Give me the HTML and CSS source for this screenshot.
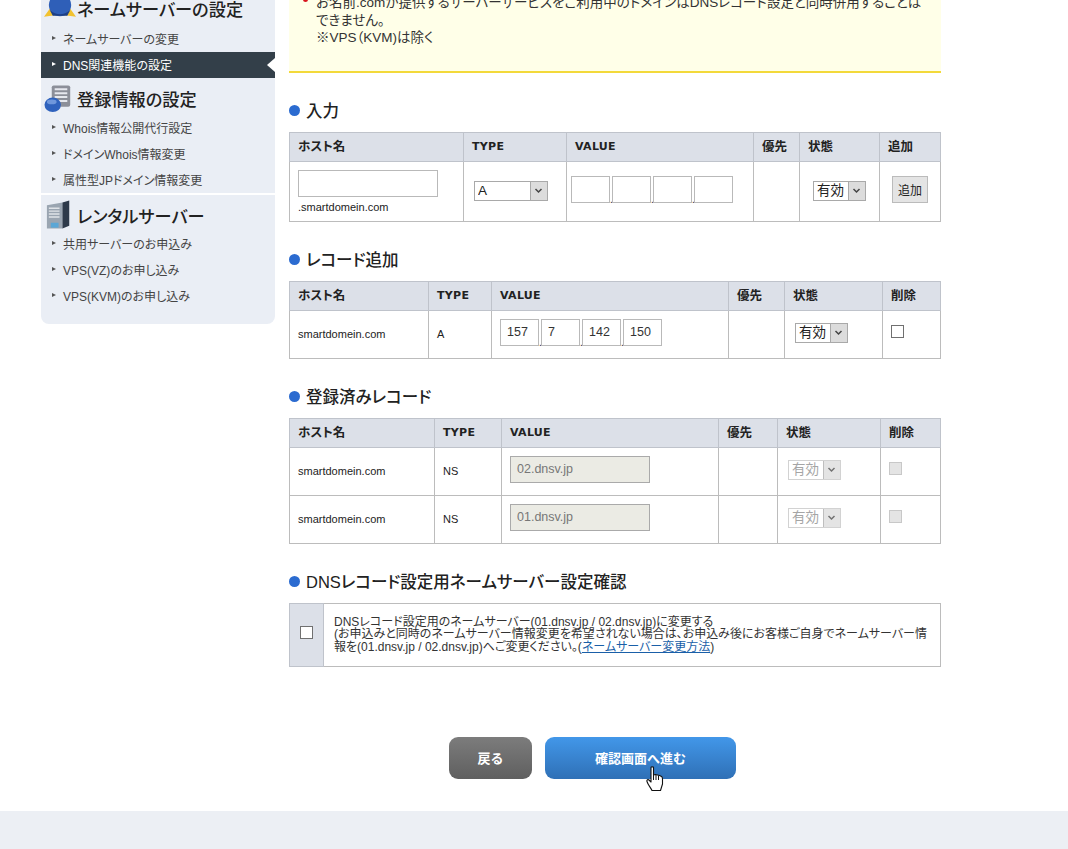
FILE: index.html
```html
<!DOCTYPE html>
<html lang="ja">
<head>
  <meta charset="UTF-8" />
  <title>DNS関連機能の設定</title>
  <link rel="stylesheet" href="styles.css">
</head>
<body>

<div class="layout">
  <div class="sidebar">
    <div class="side-title first">
      <svg class="side-icon" width="34" height="30" viewBox="0 0 34 30">
        <path d="M0 24 L10 10 L15 22 Z M33 24 L23 10 L18 22 Z" fill="#f2c230"/>
        <circle cx="16.500" cy="12" r="11.500" fill="#2f5fb8"/>
        <path d="M6 17 Q16.500 26 27 17 L24 23 L9 23 Z" fill="#1d3f85"/>
      </svg>
      ネームサーバーの設定
    </div>
    <a class="side-link">ネームサーバーの変更</a>
    <a class="side-link active">DNS関連機能の設定</a>

    <div class="side-title">
      <svg class="side-icon" width="34" height="30" viewBox="0 0 34 30">
        <rect x="8" y="1" width="19" height="22" rx="2" fill="#8c8f99"/>
        <path d="M11 5h13M11 9h13M11 13h13M11 17h13" stroke="#e6e8ee" stroke-width="2"/>
        <ellipse cx="9" cy="21" rx="8.500" ry="7.500" fill="#2f62bd"/>
        <ellipse cx="8" cy="18" rx="5" ry="2.500" fill="#6f97dc"/>
      </svg>
      登録情報の設定
    </div>
    <a class="side-link">Whois情報公開代行設定</a>
    <a class="side-link">ドメインWhois情報変更</a>
    <a class="side-link">属性型JPドメイン情報変更</a>

    <div class="side-sep"></div>

    <div class="side-title">
      <svg class="side-icon" width="34" height="30" viewBox="0 0 34 30">
        <path d="M3 5 L19 2 L19 29 L3 29 Z" fill="#9aa5b1"/>
        <path d="M19 2 L26 0 L26 26 L19 29 Z" fill="#2e3a4a"/>
        <path d="M5 8h11M5 11h11M5 14h11M5 17h11" stroke="#dfe3e8" stroke-width="1.500"/>
        <rect x="7" y="23" width="8" height="5" fill="#5ba7d6"/>
      </svg>
      レンタルサーバー
    </div>
    <a class="side-link">共用サーバーのお申込み</a>
    <a class="side-link">VPS(VZ)のお申し込み</a>
    <a class="side-link">VPS(KVM)のお申し込み</a>
  </div>

  <div class="main">
    <div class="notice">
      <ul>
        <li>お名前.comが提供するサーバーサービスをご利用中のドメインはDNSレコード設定と同時併用することは<br>できません。<br>※VPS（KVM)は除く</li>
      </ul>
    </div>

    <h3 class="sec-title">入力</h3>
    <table class="grid t-input">
      <tr>
        <th>ホスト名</th><th class="en">TYPE</th><th class="en">VALUE</th><th>優先</th><th>状態</th><th>追加</th>
      </tr>
      <tr class="row-tall">
        <td class="host-cell">
          <input type="text" class="host-input">
          <div class="host-suffix">.smartdomein.com</div>
        </td>
        <td><select class="sel sel-type"><option>A</option></select></td>
        <td>
          <div class="ip-group">
            <input type="text"><span class="dot">.</span><input type="text"><span class="dot">.</span><input type="text"><span class="dot">.</span><input type="text">
          </div>
        </td>
        <td></td>
        <td class="center"><select class="sel sel-state"><option>有効</option></select></td>
        <td class="center"><button class="add-btn" type="button">追加</button></td>
      </tr>
    </table>

    <h3 class="sec-title">レコード追加</h3>
    <table class="grid t-add">
      <tr>
        <th>ホスト名</th><th class="en">TYPE</th><th class="en">VALUE</th><th>優先</th><th>状態</th><th>削除</th>
      </tr>
      <tr class="row-mid">
        <td>smartdomein.com</td>
        <td>A</td>
        <td>
          <div class="ip-group">
            <input type="text" value="157"><span class="dot">.</span><input type="text" value="7"><span class="dot">.</span><input type="text" value="142"><span class="dot">.</span><input type="text" value="150">
          </div>
        </td>
        <td></td>
        <td><select class="sel sel-state"><option>有効</option></select></td>
        <td><input type="checkbox" class="check"></td>
      </tr>
    </table>

    <h3 class="sec-title">登録済みレコード</h3>
    <table class="grid t-done">
      <tr>
        <th>ホスト名</th><th class="en">TYPE</th><th class="en">VALUE</th><th>優先</th><th>状態</th><th>削除</th>
      </tr>
      <tr class="row-mid">
        <td>smartdomein.com</td>
        <td>NS</td>
        <td><input type="text" class="value-off" value="02.dnsv.jp" disabled></td>
        <td></td>
        <td><select class="sel sel-state sel-off" disabled><option>有効</option></select></td>
        <td><input type="checkbox" class="check" disabled></td>
      </tr>
      <tr class="row-mid">
        <td>smartdomein.com</td>
        <td>NS</td>
        <td><input type="text" class="value-off" value="01.dnsv.jp" disabled></td>
        <td></td>
        <td><select class="sel sel-state sel-off" disabled><option>有効</option></select></td>
        <td><input type="checkbox" class="check" disabled></td>
      </tr>
    </table>

    <h3 class="sec-title">DNSレコード設定用ネームサーバー設定確認</h3>
    <table class="grid t-confirm">
      <tr>
        <th class="center"><input type="checkbox" class="check"></th>
        <td>DNSレコード設定用のネームサーバー(01.dnsv.jp / 02.dnsv.jp)に変更する<br>(お申込みと同時のネームサーバー情報変更を希望されない場合は、お申込み後にお客様ご自身でネームサーバー情報を(01.dnsv.jp / 02.dnsv.jp)へご変更ください。(<a href="#">ネームサーバー変更方法</a>)</td>
      </tr>
    </table>

    <div class="actions">
      <button class="btn btn-back" type="button">戻る</button>
      <button class="btn btn-next" type="button">確認画面へ進む
        <svg class="hand" width="18" height="26" viewBox="0 0 18 26">
          <path d="M5 1.500 C5 .5 7.500 .5 7.500 1.500 L7.500 9 L9.500 8.500 L11.500 9 L13.500 9.500 L15.500 10.500 C16.500 11 16.500 12 16.500 13 L16.500 18 L14.500 24.500 L6 24.500 C5 22 2 19 1 15.500 C.5 14 2 13 3 14 L5 16 Z" fill="#fff" stroke="#111" stroke-width="1.100" stroke-linejoin="round"/>
          <path d="M7.500 9 L7.500 14 M10 9 L10 14 M12.500 9.500 L12.500 14" stroke="#111" stroke-width="1" fill="none"/>
        </svg>
      </button>
    </div>
  </div>
</div>

<div class="footer"></div>

</body>
</html>
```

FILE: styles.css
```css
html, body {
  margin: 0;
  padding: 0;
  height: 849px;
  overflow: hidden;
  background: #fff;
  color: #222;
  font-family: "Liberation Sans", "Noto Sans CJK JP", sans-serif;
  font-feature-settings: "palt";
}

.layout {
  display: flex;
  align-items: flex-start;
  gap: 14px;
  margin-top: -30px;
  padding-left: 41px;
}

/* sidebar */
.sidebar {
  width: 234px;
  padding: 22px 0 15px;
  background: #eaeef5;
  border-radius: 0 0 8px 8px;
}

.side-title {
  display: flex;
  align-items: center;
  box-sizing: border-box;
  height: 37px;
  padding: 6px 0 2px 3px;
  font-size: 17.200px;
  font-weight: 500;
  color: #222;
}

.side-title.first {
  height: 34px;
  padding-top: 0;
}

.side-sep + .side-title {
  height: 36px;
}

.side-icon {
  flex: none;
  width: 33px;
}

.side-link {
  display: block;
  position: relative;
  height: 26px;
  line-height: 28px;
  padding-left: 22px;
  font-size: 12px;
  color: #444;
}

.side-link::before {
  content: "";
  position: absolute;
  left: 11px;
  top: 10px;
  border-left: 4px solid #555;
  border-top: 2.500px solid transparent;
  border-bottom: 2.500px solid transparent;
}

.side-link.active {
  background: #333f49;
  color: #fff;
}

.side-link.active::before {
  border-left-color: #fff;
}

.side-link.active::after {
  content: "";
  position: absolute;
  right: 0;
  top: 6px;
  border-right: 8px solid #fff;
  border-top: 7px solid transparent;
  border-bottom: 7px solid transparent;
}

.side-sep {
  height: 2px;
  background: #fff;
}

/* main column */
.main {
  width: 652px;
}

.notice {
  padding: 24px 10px 24px 27px;
  background: #ffffe8;
  border-bottom: 2px solid #f3d93a;
  font-size: 13.500px;
  line-height: 17.500px;
  color: #333;
}

.notice ul {
  margin: 0;
  padding: 0;
  list-style: none;
}

.notice li {
  position: relative;
}

.notice li::before {
  content: "";
  position: absolute;
  left: -13px;
  top: 3px;
  width: 5px;
  height: 5px;
  border-radius: 50%;
  background: #d8141c;
}

.sec-title {
  display: flex;
  align-items: center;
  gap: 6px;
  box-sizing: border-box;
  height: 20px;
  margin: 28px 0 11px;
  padding-bottom: 1px;
  font-size: 16.500px;
  font-weight: 500;
  color: #222;
}

.sec-title::before {
  content: "";
  width: 11px;
  height: 11px;
  border-radius: 50%;
  background: #2b6bd0;
}

/* tables */
.grid {
  width: 652px;
  table-layout: fixed;
  border-collapse: collapse;
  font-size: 11px;
}

.grid th,
.grid td {
  border: 1px solid #bcbcbc;
  padding: 0 8px;
  text-align: left;
}

.grid th {
  height: 26px;
  padding-bottom: 2px;
  background: #dce0e8;
  border-color: #bfc3cb;
  font-size: 12.500px;
  font-weight: 700;
  color: #222;
}

.grid th.en {
  padding-bottom: 0;
  height: 28px;
  font-family: "DejaVu Sans", sans-serif;
  font-size: 11px;
  letter-spacing: .3px;
}

.grid .center {
  text-align: center;
}

.row-tall td {
  height: 59px;
}

.row-mid td {
  height: 45px;
  padding-bottom: 2px;
}

.row-mid td:nth-child(-n+2) {
  height: 47px;
  padding-bottom: 0;
}

.t-input th:nth-child(1) { width: 157px; }
.t-input th:nth-child(2) { width: 86px; }
.t-input th:nth-child(3) { width: 170px; }
.t-input th:nth-child(4) { width: 29px; }
.t-input th:nth-child(5) { width: 63px; }

.t-add th:nth-child(1) { width: 122px; }
.t-add th:nth-child(2) { width: 46px; }
.t-add th:nth-child(3) { width: 220px; }
.t-add th:nth-child(4) { width: 39px; }
.t-add th:nth-child(5) { width: 81px; }

.t-done th:nth-child(1) { width: 128px; }
.t-done th:nth-child(2) { width: 50px; }
.t-done th:nth-child(3) { width: 200px; }
.t-done th:nth-child(4) { width: 42px; }
.t-done th:nth-child(5) { width: 86px; }

.t-input td:nth-child(3) {
  padding-left: 4px;
}

.t-confirm th {
  width: 17px;
  height: 62px;
  padding: 0 8px;
}

.t-confirm td {
  padding: 0 10px;
  font-size: 12px;
  line-height: 12.500px;
  color: #333;
}

.t-confirm a {
  color: #1a5fa8;
}

/* form controls */
input[type="text"] {
  box-sizing: border-box;
  height: 27px;
  margin: 0;
  padding: 0 6px;
  border: 1px solid #b9b9b9;
  background: #fff;
  font-family: "Liberation Sans", sans-serif;
  font-size: 12.500px;
  color: #333;
  outline: none;
}

.row-tall .host-cell {
  height: 57px;
  padding-top: 2px;
}

.host-input {
  display: block;
  width: 140px;
}

.host-suffix {
  margin-top: 3px;
  font-size: 11px;
  line-height: 14px;
}

.ip-group {
  display: flex;
  align-items: flex-end;
  padding-bottom: 4px;
}

.row-mid .ip-group {
  padding-bottom: 2px;
}

.ip-group input[type="text"] {
  width: 39px;
}

.dot {
  width: 2px;
  line-height: 7px;
  font-size: 10px;
  overflow: visible;
}

.value-off[type="text"] {
  width: 140px;
  margin-bottom: 2px;
  background: #ebebe4;
  border-color: #aaa;
  color: #777;
  vertical-align: middle;
}

.sel {
  box-sizing: border-box;
  height: 20px;
  margin: 0;
  padding: 0 0 0 3px;
  appearance: none;
  border: 1px solid #a9a9a9;
  border-radius: 0;
  background: #fff url("data:image/svg+xml,%3Csvg xmlns='http://www.w3.org/2000/svg' width='17' height='18'%3E%3Crect width='17' height='18' fill='%23dcdcdc'/%3E%3Cpath d='M0 0h1v18H0z' fill='%23a9a9a9'/%3E%3Cpath d='M5.500 7l3 3 3-3' fill='none' stroke='%23444' stroke-width='1.500'/%3E%3C/svg%3E") no-repeat right center;
  font-family: "Liberation Sans", "Noto Sans CJK JP", sans-serif;
  font-size: 13.500px;
  line-height: 18px;
  color: #222;
  vertical-align: middle;
}

.sel-type {
  width: 74px;
  margin-left: 2px;
}

.sel-state {
  width: 53px;
}

.row-mid .sel-state {
  margin-left: 2px;
}

.sel-off {
  border-color: #c4c4c4;
  color: #888;
  opacity: .75;
}

.add-btn {
  box-sizing: border-box;
  width: 36px;
  height: 27px;
  margin-bottom: 4px;
  padding: 0;
  background: #e4e4e4;
  border: 1px solid #bbb;
  font-family: "Noto Sans CJK JP", sans-serif;
  font-size: 12px;
  color: #222;
  vertical-align: middle;
}

.check {
  appearance: none;
  display: inline-block;
  width: 13px;
  height: 13px;
  margin: 0;
  background: #fff;
  border: 1px solid #707070;
  vertical-align: middle;
}

.row-mid .check {
  margin-bottom: 4px;
}

.t-confirm .check {
  margin-bottom: 4px;
}

.check:disabled {
  background: #e4e4e4;
  border-color: #c8c8c8;
}

/* buttons */
.actions {
  display: flex;
  justify-content: center;
  gap: 13px;
  margin-top: 70px;
  margin-bottom: 32px;
  padding-right: 45px;
}

.btn {
  position: relative;
  height: 42px;
  padding: 0;
  border: none;
  border-radius: 9px;
  font-family: "Noto Sans CJK JP", sans-serif;
  font-size: 13px;
  font-weight: 700;
  color: #fff;
}

.btn-back {
  width: 83px;
  background: linear-gradient(#7c7c7c, #5f5f5f);
}

.btn-next {
  width: 191px;
  background: linear-gradient(#4297e9, #2f70b6);
}

.hand {
  position: absolute;
  left: 101px;
  top: 29px;
}

.footer {
  height: 38px;
  background: #eceff4;
}
```
